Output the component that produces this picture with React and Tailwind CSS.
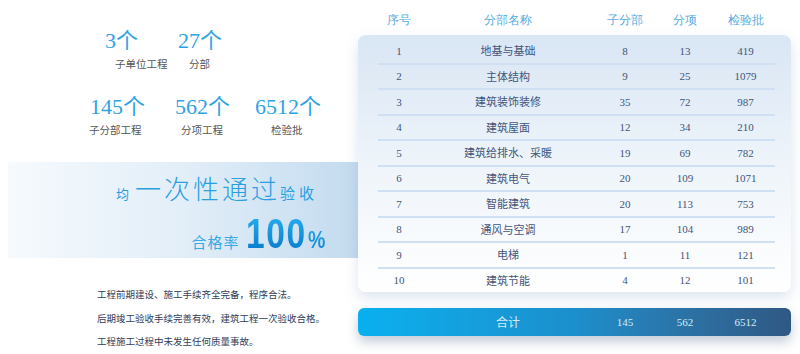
import React from "react";

const rows = [
  [1, "地基与基础", 8, 13, 419],
  [2, "主体结构", 9, 25, 1079],
  [3, "建筑装饰装修", 35, 72, 987],
  [4, "建筑屋面", 12, 34, 210],
  [5, "建筑给排水、采暖", 19, 69, 782],
  [6, "建筑电气", 20, 109, 1071],
  [7, "智能建筑", 20, 113, 753],
  [8, "通风与空调", 17, 104, 989],
  [9, "电梯", 1, 11, 121],
  [10, "建筑节能", 4, 12, 101],
];

const FONT = { fontFamily: '"Liberation Serif", "Noto Sans CJK SC", serif' };
const SANS = { fontFamily: '"Noto Sans CJK SC", "Liberation Sans", sans-serif' };
const BIG = { fontFamily: '"Liberation Sans", sans-serif' };

function Cols({ cells, className }) {
  return (
    <div className={"ml-[20px] flex w-[397px] items-center " + className}>
      <div className="w-[42px] text-center">{cells[0]}</div>
      <div className="w-[176px] text-center">{cells[1]}</div>
      <div className="w-[58px] text-center">{cells[2]}</div>
      <div className="w-[62px] text-center">{cells[3]}</div>
      <div className="w-[59px] text-center">{cells[4]}</div>
    </div>
  );
}

function Stat({ num, label, numPl, labelPl, width }) {
  return (
    <div className={"flex flex-col " + width}>
      <div className={"h-[24px] text-[22px] leading-[24px] text-[#2ea3e4] " + numPl} style={FONT}>
        {num}
      </div>
      <div className={"mt-[4px] h-[14px] text-[10.5px] leading-[14px] text-[#555] " + labelPl} style={SANS}>
        {label}
      </div>
    </div>
  );
}

export default function App() {
  return (
    <div className="flex h-[354px] w-[800px] overflow-hidden bg-white">
      {/* left */}
      <div className="flex w-[358px] flex-col">
        <div className="h-[162px]">
          <div className="mt-[29px] flex pl-[105px]">
            <Stat num="3个" label="子单位工程" numPl="" labelPl="pl-[10px]" width="w-[73px]" />
            <Stat num="27个" label="分部" numPl="" labelPl="pl-[11px]" width="w-[80px]" />
          </div>
          <div className="mt-[24px] flex pl-[89px]">
            <Stat num="145个" label="子分部工程" numPl="pl-[1px]" labelPl="" width="w-[86px]" />
            <Stat num="562个" label="分项工程" numPl="" labelPl="pl-[6px]" width="w-[80px]" />
            <Stat num="6512个" label="检验批" numPl="" labelPl="pl-[16px]" width="w-[80px]" />
          </div>
        </div>
        <div
          className="ml-[8px] flex h-[96px] w-[350px] flex-col items-end bg-gradient-to-r from-[#f6fafd] via-[#e2eef8] to-[#c3dbef] pr-[30px] pt-[10px] text-[#2a9fe2]"
          style={SANS}
        >
          <div className="flex items-baseline pr-[10px] leading-[32px]">
            <span className="text-[13px] tracking-[2px]">均</span>
            <span className="ml-[4px] text-[26px] font-light tracking-[3px]">一次性通过</span>
            <span className="text-[15px] tracking-[4px]">验收</span>
          </div>
          <div className="flex items-baseline leading-[46px]">
            <span className="mr-[6px] text-[15px] tracking-[1px] text-[#38a8e6]">合格率</span>
            <span className="inline-block w-[62px]">
              <span
                className="inline-block origin-left scale-x-[0.78] bg-gradient-to-b from-[#2bb4f2] to-[#0676c8] bg-clip-text text-[43px] font-bold tracking-[2px] text-transparent"
                style={BIG}
              >
                100
              </span>
            </span>
            <span
              className="inline-block origin-left scale-x-[0.85] bg-gradient-to-b from-[#2bb4f2] to-[#0676c8] bg-clip-text text-[23px] font-bold text-transparent"
              style={BIG}
            >
              %
            </span>
          </div>
        </div>
        <div className="mt-[25px] pl-[97px] text-[9.5px] leading-[23.5px] text-[#33405a]" style={SANS}>
          <div>工程前期建设、施工手续齐全完备，程序合法。</div>
          <div>后期竣工验收手续完善有效，建筑工程一次验收合格。</div>
          <div>工程施工过程中未发生任何质量事故。</div>
        </div>
      </div>

      {/* right */}
      <div className="flex w-[433px] flex-col">
        <div className="h-[35px] pt-[4px]">
          <Cols
            cells={["序号", "分部名称", "子分部", "分项", "检验批"]}
            className="h-[31px] text-[12px] text-[#55ace0]"
          />
        </div>
        <div
          className="rounded-[8px] bg-gradient-to-b from-[#d9e6f4] via-[#eef4fa] to-white pt-[4px] shadow-[0_6px_14px_rgba(120,150,190,0.25)]"
          style={FONT}
        >
          {rows.map((r, i) => (
            <div
              key={r[0]}
              className={
                "ml-[20px] w-[397px] " + (i < rows.length - 1 ? "border-b-2 border-[#cfe0f2]" : "")
              }
            >
              <div className="-ml-[20px]">
                <Cols
                  cells={[r[0], <span style={SANS}>{r[1]}</span>, r[2], r[3], r[4]]}
                  className="h-[23.5px] text-[11px] text-[#43557a]"
                />
              </div>
            </div>
          ))}
        </div>
        <div
          className="mt-[16px] h-[28px] rounded-[6px] bg-gradient-to-r from-[#08b0ef] via-[#1b8fcc] to-[#2f5883] shadow-[0_6px_12px_rgba(60,90,130,0.3)]"
          style={FONT}
        >
          <Cols
            cells={["", <span style={SANS} className="text-[12px]">合计</span>, 145, 562, 6512]}
            className="h-[28px] text-[11px] text-[#d6ebf7]"
          />
        </div>
      </div>
    </div>
  );
}
